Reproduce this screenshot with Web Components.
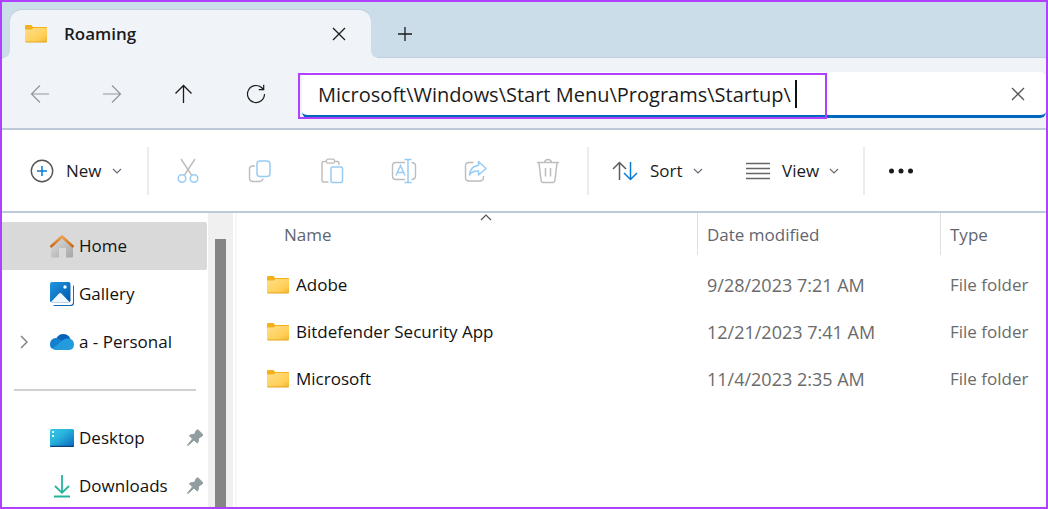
<!DOCTYPE html>
<html lang="en">
<head>
<meta charset="utf-8">
<title>Roaming</title>
<style>
  html, body { margin: 0; height: 100%; }
  body { font-family: "Open Sans", "Noto Sans", sans-serif; font-size: 17px; line-height: 24px; color: #1b1b1b; background: #fff; }
</style>
</head>
<body>
<fe-window>
  <fe-tab-strip slot="tabs"><fe-tab>Roaming</fe-tab></fe-tab-strip>
  <fe-nav-bar slot="nav" path="Microsoft\Windows\Start Menu\Programs\Startup\"></fe-nav-bar>
  <fe-toolbar slot="toolbar">
    <fe-command icon="new" menu>New</fe-command>
    <fe-separator></fe-separator>
    <fe-command icon="cut" label="Cut"></fe-command>
    <fe-command icon="copy" label="Copy"></fe-command>
    <fe-command icon="paste" label="Paste"></fe-command>
    <fe-command icon="rename" label="Rename"></fe-command>
    <fe-command icon="share" label="Share"></fe-command>
    <fe-command icon="trash" label="Delete"></fe-command>
    <fe-separator></fe-separator>
    <fe-command icon="sort" menu>Sort</fe-command>
    <fe-command icon="view" menu>View</fe-command>
    <fe-separator></fe-separator>
    <fe-command icon="more" label="See more" compact></fe-command>
  </fe-toolbar>
  <fe-sidebar slot="side">
    <fe-place icon="home" selected>Home</fe-place>
    <fe-place icon="gallery">Gallery</fe-place>
    <fe-place icon="cloud" expandable>a - Personal</fe-place>
    <fe-rule></fe-rule>
    <fe-place icon="desktop" pinned>Desktop</fe-place>
    <fe-place icon="download" pinned>Downloads</fe-place>
  </fe-sidebar>
  <fe-files></fe-files>
</fe-window>

<script>
const ICONS = {
  folder: [24, 18, `<defs><linearGradient id="g" x1="0" y1="0" x2="1" y2="1"><stop offset="0" stop-color="#ffdf8a"/><stop offset=".7" stop-color="#ffce55"/><stop offset="1" stop-color="#efb52e"/></linearGradient></defs><path d="M1 1Q1 0 2 0H7.500L9 2H22.500Q23 2 23 2.500V8H1Z" fill="#f3b21b"/><path d="M1 4.500H7.500L9.500 3H23V16.500Q23 17 22.500 17H1.500Q1 17 1 16.500Z" fill="url(#g)"/><path d="M1.500 17H22.500" stroke="#e5a41c"/>`],
  close: [14, 14, `<path d="M1 1L13 13M13 1L1 13" stroke="currentColor" stroke-width="1.300"/>`],
  plus: [16, 16, `<path d="M8 1V15M1 8H15" stroke="currentColor" stroke-width="1.300"/>`],
  back: [20, 20, `<path d="M19 10H1.500M10 1.500L1.500 10L10 18.500" stroke="currentColor" stroke-width="1.200"/>`],
  forward: [20, 20, `<path d="M1 10H18.500M10 1.500L18.500 10L10 18.500" stroke="currentColor" stroke-width="1.200"/>`],
  up: [20, 20, `<path d="M9.500 19V1.500M1.500 9.500L9.500 1.500L17.500 9.500" stroke="currentColor" stroke-width="1.300"/>`],
  refresh: [20, 20, `<path d="M18.500 10A8.500 8.500 0 1 1 15.800 3.800L17.500 5.500M17.700 .8V5.700H12.800" stroke="currentColor" stroke-width="1.200"/>`],
  down: [10, 6, `<path d="M1 1L5 5L9 1" stroke="#666b75" stroke-width="1.200"/>`],
  caretup: [12, 7, `<path d="M1 6L6 1L11 6" stroke="#555" stroke-width="1.200"/>`],
  right: [8, 14, `<path d="M1 1L7 7L1 13" stroke="#858585" stroke-width="1.500"/>`],
  new: [24, 24, `<circle cx="12" cy="12" r="10.700" stroke="#555" stroke-width="1.400"/><path d="M12 7V17M7 12H17" stroke="#0a7bd5" stroke-width="1.500"/>`],
  cut: [24, 26, `<path d="M5 1L15.500 17M19 1L8.500 17" stroke="#bdbdbd" stroke-width="1.400"/><circle cx="6" cy="20.500" r="3.800" stroke="#99ccf3" stroke-width="1.500"/><circle cx="18" cy="20.500" r="3.800" stroke="#99ccf3" stroke-width="1.500"/>`],
  copy: [24, 24, `<path d="M7 7H4Q1.500 7.500 1.500 10V19Q1.500 22.500 5 22.500H11.500Q14.500 22.500 15 19.500" stroke="#bdbdbd" stroke-width="1.400"/><rect x="9" y="2" width="13" height="15.500" rx="3" stroke="#99ccf3" stroke-width="1.500"/>`],
  paste: [24, 26, `<path d="M6.500 3.500H3.500Q2 3.500 2 5V22.500Q2 24 3.500 24H8.500M14.500 3.500H17.500Q19 3.500 19 5V7" stroke="#bdbdbd" stroke-width="1.400"/><rect x="6.500" y="1.200" width="8" height="4" rx="1.500" stroke="#bdbdbd" stroke-width="1.300"/><rect x="11" y="9" width="11.500" height="15.500" rx="1.500" stroke="#99ccf3" stroke-width="1.500"/>`],
  rename: [26, 26, `<path d="M14 4.500H5Q1.500 4.500 1.500 8V18Q1.500 21.500 5 21.500H14M20.500 4.500Q24.500 4.500 24.500 8V18Q24.500 21.500 20.500 21.500" stroke="#bdbdbd" stroke-width="1.400"/><path d="M5 17.500L9.500 7.500L14 17.500M6.500 14.500H12.500M17 1.500V24.500M13.500 1.500H20.500M13.500 24.500H20.500" stroke="#99ccf3" stroke-width="1.500"/>`],
  share: [24, 24, `<path d="M9.500 3.500H5Q1.500 3.500 1.500 7V18.500Q1.500 22 5 22H16Q19.500 22 19.500 18V17" stroke="#bdbdbd" stroke-width="1.400"/><path d="M14.500 2.500L22 9.500L14.500 16V12Q8.500 11.500 5.500 16Q6.500 7 14.500 6.500Z" stroke="#99ccf3" stroke-width="1.500" stroke-linejoin="round"/>`],
  trash: [24, 26, `<path d="M1 4.500H23M8.500 4.500Q9 1.500 12 1.500T15.500 4.500M3 4.500L5 22Q5.300 24.500 7 24.500H17Q18.700 24.500 19 22L21 4.500M9.500 10V18.500M14.500 10V18.500" stroke="#bdbdbd" stroke-width="1.500"/>`],
  sort: [26, 20, `<path d="M7.500 19V1.500M1 8L7.500 1.500L14 8" stroke="#5d5d5d" stroke-width="1.500"/><path d="M18.500 1V18.500M12 12L18.500 18.500L25 12" stroke="#0a7bd5" stroke-width="1.500"/>`],
  view: [24, 18, `<path d="M0 1.500H24M0 6.500H24M0 11.500H24M0 16.500H24" stroke="#666" stroke-width="1.300"/>`],
  more: [26, 6, `<g fill="#1b1b1b"><circle cx="3.500" cy="3" r="2.500"/><circle cx="13" cy="3" r="2.500"/><circle cx="22.500" cy="3" r="2.500"/></g>`],
  home: [26, 24, `<defs><linearGradient id="g" x2="1" y2="1"><stop offset="0" stop-color="#e0e0e0"/><stop offset="1" stop-color="#a5a5a5"/></linearGradient><linearGradient id="o" x2="0" y2="1"><stop stop-color="#eda04a"/><stop offset="1" stop-color="#c9660f"/></linearGradient></defs><path d="M2 12L13 2L24 12V22Q24 23.500 22.500 23.500H17V14H10V23.500H3.500Q2 23.500 2 22Z" fill="url(#g)"/><path d="M1.500 13L13 2.500L24.500 13" stroke="url(#o)" stroke-width="2.500" stroke-linejoin="round"/>`],
  gallery: [26, 26, `<defs><linearGradient id="g" x2="1" y2="1"><stop stop-color="#2198e0"/><stop offset="1" stop-color="#0054ab"/></linearGradient></defs><path d="M24 4Q25 4.500 25 6V22Q25 25 22 25H6Q4.500 25 4 24H21Q24 24 24 21Z" fill="#1368b4"/><rect x="1" y="1" width="20.500" height="20.500" rx="2" fill="url(#g)"/><path d="M2 21L9.800 12.800Q11.200 11.300 12.600 12.800L20.500 21Q20 21.500 19 21.500H3Z" fill="#eef7ff"/><circle cx="16" cy="6" r="1.700" fill="#fff"/>`],
  cloud: [26, 18, `<path d="M7 6Q9.500 1 14 1Q19.500 1 21.500 6L14 12Z" fill="#0762b8"/><path d="M1 11.500Q1 5.500 7 5Q10 5 12 7L17 11L4 16Q1 15 1 11.500Z" fill="#147fd1"/><path d="M11 9.500Q15 5 20 5.500Q25 6.500 25 11.500Q25 17 19 17H7Q5 17 3.500 15.800Z" fill="#239bdd"/>`],
  desktop: [26, 20, `<defs><linearGradient id="g" x2="1" y2="1"><stop stop-color="#35c8e5"/><stop offset=".4" stop-color="#29b4dd"/><stop offset="1" stop-color="#0866bf"/></linearGradient></defs><rect x="1" y="1" width="24" height="18" rx="1.500" fill="url(#g)"/><path d="M1 17.800H25V18Q25 19 24 19H2Q1 19 1 18Z" fill="#08427c"/><path d="M3.200 3H5V5H3.200ZM3.200 7H5V9H3.200Z" fill="#fff"/>`],
  download: [26, 24, `<path d="M13 1V18.500M6 12L13 18.800L20 12M5 22.500H21" stroke="#26b39b" stroke-width="1.800"/>`],
  pin: [18, 18, `<path d="M10.500 1.200Q11.500 .5 12.500 1.300L16.300 5Q17.300 6 16 7L12.800 9L12 13.500Q11.700 14.300 10.800 13.700L8 11L2 16.500L1.500 16.200L6.500 9.800L3.800 7.200Q3.200 6.300 4.200 6L8.500 5.300Z" fill="#929da1" stroke="#929da1" stroke-linejoin="round"/>`]
};
function define(name, css, render) {
  customElements.define(name, class extends HTMLElement {
    connectedCallback() {
      if (this.shadowRoot) return;
      this.attachShadow({ mode: "open" }).innerHTML =
        `<style>*{box-sizing:border-box}button{font:inherit;color:inherit;background:none;border:0;padding:0;margin:0}${css}</style>${render(this)}`;
    }
  });
}
const icon = (n) => `<fe-icon name="${n}"></fe-icon>`;

define("fe-icon", `:host{display:block;flex:none}svg{display:block}`, (el) => {
  const [w, h, body] = ICONS[el.getAttribute("name")];
  return `<svg width="${w}" height="${h}" viewBox="0 0 ${w} ${h}" fill="none" aria-hidden="true">${body}</svg>`;
});

define("fe-window", `
  :host{display:flex;flex-direction:column;height:100vh;box-sizing:border-box;border:2px solid #b040ff;overflow:hidden}
  .content{display:grid;grid-template-columns:235px minmax(0,1fr);flex:1;min-height:0}
  main{min-width:0;overflow:hidden}`,
  () => `<slot name="tabs"></slot><slot name="nav"></slot><slot name="toolbar"></slot>
  <div class="content"><slot name="side"></slot><main><slot></slot></main></div>`);

define("fe-tab-strip", `
  :host{display:flex;background:#ccddea;padding:8px 8px 0;height:56px;box-sizing:border-box;box-shadow:inset 0 -1px #bfcfdd}
  button{width:68px;height:48px;display:grid;place-items:center}`,
  () => `<slot></slot><button aria-label="New tab">${icon("plus")}</button>`);

define("fe-tab", `
  :host{display:flex;align-items:center;width:361px;box-sizing:border-box;padding:0 24px 0 14px;background:#f0f4f9;border-radius:12px 12px 0 0;font-weight:600;position:relative;box-shadow:0 -1px 1px #bfcfdd}
  :host::before,:host::after{content:"";position:absolute;bottom:0;width:6px;height:6px}
  :host::before{right:100%;background:radial-gradient(circle at 0 0,#ccddea 5px,#f0f4f9 6px)}
  :host::after{left:100%;background:radial-gradient(circle at 100% 0,#ccddea 5px,#f0f4f9 6px)}
  .t{flex:1;margin-left:16px}
  button{width:16px;height:24px;display:grid;place-items:center}`,
  () => `${icon("folder")}<span class="t"><slot></slot></span><button aria-label="Close tab">${icon("close")}</button>`);

define("fe-nav-bar", `
  :host{display:flex;background:#f0f4f9;padding:14px 0 10px 2px;border-bottom:2px solid #bccad9}
  .b{width:72px;height:44px;display:grid;place-items:center}
  .b:disabled{color:#919699}
  fe-address{flex:1;margin-left:10px}`,
  (el) => `<button class="b" disabled aria-label="Back">${icon("back")}</button>
  <button class="b" disabled aria-label="Forward">${icon("forward")}</button>
  <button class="b" aria-label="Up">${icon("up")}</button>
  <button class="b" aria-label="Refresh">${icon("refresh")}</button>
  <fe-address value="${el.getAttribute("path")}"></fe-address>`);

define("fe-address", `
  :host{display:flex;align-items:center;position:relative;height:46px;box-sizing:border-box;background:#fff;border-radius:6px;border-bottom:3px solid #0067c0;padding:0 20px 0 16px}
  input{field-sizing:content;width:auto;min-width:0;border:0;outline:0;padding:3px 0 0;margin:0;background:none;font:inherit;font-size:20px;line-height:28px;color:#1b1b1b}
  .caret{width:2px;height:28px;background:#111;margin-left:4px}
  .x{margin-left:auto;color:#555;width:16px;height:24px;display:grid;place-items:center}
  .mark{position:absolute;left:-4px;top:1px;width:529px;height:46px;border:2px solid #b040ff;pointer-events:none}`,
  (el) => `<input type="text" aria-label="Address" value="${el.getAttribute("value")}"><span class="caret"></span>
  <button class="x" aria-label="Clear">${icon("close")}</button><div class="mark"></div>`);

define("fe-toolbar", `:host{display:flex;align-items:center;height:83px;box-sizing:border-box;background:#fff;border-bottom:2px solid #bccad9;padding-left:8px}`,
  () => `<slot></slot>`);
define("fe-separator", `:host{display:block;width:2px;height:48px;background:#ececec;margin:0 3px}`, () => ``);
define("fe-command", `
  :host{display:block}
  button{height:48px;width:72px;display:flex;align-items:center;justify-content:center}
  :host([menu]) button{width:134px;padding-left:20px;justify-content:flex-start}
  :host([compact]) button{width:66px}
  .t{margin:0 10px 0 12px}`,
  (el) => el.hasAttribute("menu")
    ? `<button aria-haspopup="menu">${icon(el.getAttribute("icon"))}<span class="t"><slot></slot></span>${icon("down")}</button>`
    : `<button aria-label="${el.getAttribute("label")}">${icon(el.getAttribute("icon"))}</button>`);

define("fe-sidebar", `
  :host{display:grid;grid-template-columns:minmax(0,1fr) 25px 4px;min-height:0;overflow:hidden}
  nav{padding-top:9px;overflow:hidden}
  .track{background:#f0f0f0;padding:26px 7px 0}
  .thumb{height:100%;background:#858585}
  .edge{border-right:2px solid #f7f7f7}`,
  () => `<nav aria-label="Places"><slot></slot></nav><div class="track"><div class="thumb"></div></div><div class="edge"></div>`);
define("fe-rule", `:host{display:block;padding:23px 12px}hr{margin:0;border:0;height:2px;background:#d0d0d0}`, () => `<hr>`);
define("fe-place", `
  :host{display:block;color:#111}
  :host([selected]){background:#d9d9d9;border-radius:0 2px 2px 0;margin-right:1px}
  a{display:flex;align-items:center;height:48px;color:inherit;text-decoration:none;padding:0 4px 0 18px}
  .exp{width:29px}.t{flex:1;margin-left:4px;white-space:nowrap}`,
  (el) => `<a href="#"><span class="exp">${el.hasAttribute("expandable") ? icon("right") : ""}</span>${icon(el.getAttribute("icon"))}<span class="t"><slot></slot></span>${el.hasAttribute("pinned") ? icon("pin") : ""}</a>`);

const FILES = [["Adobe", "9/28/2023 7:21 AM"], ["Bitdefender Security App", "12/21/2023 7:41 AM"], ["Microsoft", "11/4/2023 2:35 AM"]];
define("fe-files", `
  :host{display:block}
  table{width:100%;table-layout:fixed;border-collapse:separate;border-spacing:0}
  .date{width:243px}.type{width:106px}
  th{font-weight:400;text-align:left;height:42px;padding:1px 0 0 9px;color:#5f6670;border-left:1px solid #e0e0e0;position:relative}
  th:first-child{padding-left:47px;border:0}
  th fe-icon{position:absolute;top:1px;left:calc(50% + 13px)}
  td{height:47px;padding:0 0 0 10px;color:#6b6b6b;white-space:nowrap}
  td:first-child{padding-left:29px;color:#111}
  td:nth-child(2){font-size:18px}
  tbody::before{content:"";display:block;height:6px}
  .n{display:flex;align-items:center;gap:6px}`,
  () => `<table><colgroup><col><col class="date"><col class="type"></colgroup>
  <thead><tr><th aria-sort="ascending">Name${icon("caretup")}</th><th>Date modified</th><th>Type</th></tr></thead>
  <tbody>${FILES.map(([n, d]) => `<tr><td><div class="n">${icon("folder")}<span>${n}</span></div></td><td>${d}</td><td>File folder</td></tr>`).join("")}</tbody></table>`);
</script>
</body>
</html>
